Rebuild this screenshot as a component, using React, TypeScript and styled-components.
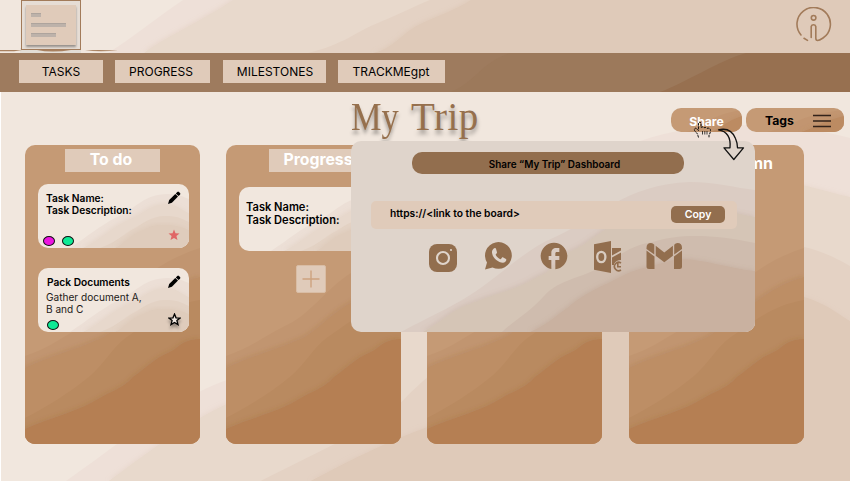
import React from "react";
import styled, { createGlobalStyle } from "styled-components";
import { MdFacebook } from "react-icons/md";

const GlobalStyle = createGlobalStyle`
  * { box-sizing: border-box; }
  body { margin: 0; background: #fff; font-family: Inter, sans-serif; color: #000; }
`;

/* ---------- dune backdrop ---------- */

type DuneSet = { w: number; h: number; colors: string[]; waves: string[]; shade: string };

const sand = ["#f1e7de", "#eee0d8", "#e8d9cc", "#e4d2c4", "#dfcab9"];

const DUNES: Record<string, DuneSet> = {
  header: {
    w: 850, h: 53, colors: sand, shade: "#c9a98f",
    waves: [
      "M108 53C135 36 160 15 183 0H850V53Z",
      "M144 53C165 37 200 22 233 0H850V53Z",
      "M308 53C345 44 355 32 380 22C400 14 415 6 430 0H850V53Z",
      "M373 53C395 48 400 34 420 24C440 15 455 10 471 0H850V53Z",
    ],
  },
  page: {
    w: 850, h: 389, colors: sand, shade: "#d0b29b",
    waves: [
      "M65 389C110 358 170 308 226 288C400 218 560 58 640 49C700 27 790 30 850 46V389Z",
      "M108 389C150 358 190 328 226 312C420 238 600 88 750 86C790 87 820 98 850 105V389Z",
      "M260 389C320 358 380 333 403 308C450 258 600 148 804 155C820 158 840 168 850 174V389Z",
      "M310 389C350 368 390 348 427 335C500 298 600 188 804 205C830 213 840 224 850 229V389Z",
    ],
  },
  column: {
    w: 175, h: 299, colors: ["#c59a75", "#c19570", "#bd8e65", "#b98a60", "#b57f52"], shade: "#8e5c33",
    waves: [
      "M0 211C25 203 40 190 57 182C85 170 98 145 125 128C145 114 160 108 175 103V299H0Z",
      "M0 223C25 211 50 205 72 195C88 190 102 170 125 158C143 145 155 138 175 132V299H0Z",
      "M0 273C25 260 45 247 60 235C80 220 88 200 105 190C125 176 145 160 175 155V299H0Z",
      "M0 284C25 273 55 266 75 253C82 248 98 244 108 232C120 224 130 213 143 208C155 203 155 195 175 194V299H0Z",
    ],
  },
  card: {
    w: 151, h: 64, colors: ["#f1e7de", "#ecdfd6", "#e7d8cc", "#e3d2c4", "#dfccbc"], shade: "#c7a78f",
    waves: [
      "M32 64C50 52 62 42 77 34C98 25 105 10 130 10C140 10 146 13 151 15V64Z",
      "M45 64C62 56 74 43 90 36C105 31 110 20 130 20C142 22 146 28 151 29V64Z",
      "M62 64C76 59 84 52 95 45C105 40 113 31 130 32C140 32 146 36 151 38V64Z",
      "M77 64C86 60 94 49 105 46C116 39 135 39 151 46V64Z",
    ],
  },
  popup: {
    w: 404, h: 191, colors: ["#dfd4cb", "#dbccc3", "#d5c5b6", "#cfbcae", "#c9b1a0"], shade: "#9c7860",
    waves: [
      "M50 191C66 182 82 175 102 164C140 145 170 110 202 97C245 78 275 43 339 41C365 41 385 47 404 49V191Z",
      "M72 191C90 181 98 171 116 164C140 154 165 149 186 136C205 128 207 119 220 110C240 102 250 87 275 78C300 66 320 62 345 66C365 65 385 73 404 76V191Z",
      "M151 191C165 178 180 170 193 155C208 138 232 137 249 126C270 114 280 104 302 101C330 92 365 94 404 102V191Z",
      "M179 191C195 184 202 177 216 167C234 151 252 145 269 136C285 127 300 126 322 119C345 115 370 126 404 130V191Z",
    ],
  },
  pill: {
    w: 96, h: 24, colors: ["#c59a75", "#c29570", "#bc8b62"], shade: "#a87950",
    waves: ["M20 24C42 20 50 7 96 2V24Z", "M54 24C68 20 75 13 96 8V24Z"],
  },
};

const DuneSvg = styled.svg`
  position: absolute;
  inset: 0;
  width: 100%;
  height: 100%;
  z-index: -1;
`;

function Dunes({ kind }: { kind: string }) {
  const d = DUNES[kind];
  const uid = React.useId();
  return (
    <DuneSvg viewBox={`0 0 ${d.w} ${d.h}`} preserveAspectRatio="none" aria-hidden>
      <filter id={uid} x="-5%" y="-10%" width="110%" height="120%">
        <feDropShadow dx="-1" dy="-1" stdDeviation="2" floodColor={d.shade} floodOpacity="0.16" />
      </filter>
      <rect width={d.w} height={d.h} fill={d.colors[0]} />
      {d.waves.map((w, i) => (
        <path key={i} d={w} fill={d.colors[i + 1]} filter={i % 2 ? `url(#${uid})` : undefined} />
      ))}
    </DuneSvg>
  );
}

/* ---------- layout ---------- */

const Screen = styled.div`
  position: relative;
  width: 850px;
  height: 481px;
  overflow: hidden;
  display: flex;
  flex-direction: column;
`;

const Header = styled.header`
  position: relative;
  isolation: isolate;
  height: 53px;
  display: flex;
  justify-content: space-between;
  padding: 0 18px 0 0;
`;

const Logo = styled.svg`
  width: 120px;
  height: 53px;
`;

const InfoIcon = styled.svg`
  width: 36px;
  height: 36px;
  margin-top: 7px;
`;

const Nav = styled.nav`
  position: relative;
  isolation: isolate;
  height: 39px;
  display: flex;
  padding: 7px 0 0 19px;
`;

const NavItem = styled.button<{ $w: number; $gap: number; $nudge?: number }>`
  width: ${(p) => p.$w}px;
  height: 23px;
  margin-right: ${(p) => p.$gap}px;
  padding: 0;
  border: 0;
  background: #e0cbba;
  font: 400 12px/23px Inter, sans-serif;
  color: #000;
  white-space: nowrap;
  text-indent: ${(p) => p.$nudge ?? 0}px;
`;

const Main = styled.main`
  position: relative;
  isolation: isolate;
  flex: 1;
  margin-left: 1px;
`;

const TitleBar = styled.div`
  height: 53px;
  display: flex;
  padding-left: 350px;
`;

const Title = styled.h1`
  flex: none;
  width: 320px;
  margin: 3px 0 0;
  display: flex;
  gap: 13px;
  font: 400 39px/44px "Liberation Serif", serif;
  color: #96704d;
  text-shadow: 0 4px 4px rgba(0, 0, 0, 0.35);
`;

const Narrow = styled.span`
  width: 47px;
  transform: scaleX(0.88);
  transform-origin: 0 0;
`;

const Trip = styled.span`
  letter-spacing: 0.5px;
`;

const Pill = styled.button<{ $w: number; $light?: boolean }>`
  position: relative;
  isolation: isolate;
  overflow: hidden;
  flex: none;
  width: ${(p) => p.$w}px;
  height: 24px;
  margin: 16px 4px 0 0;
  padding: ${(p) => (p.$light ? "3px 0 0" : "1px 12px 0 19px")};
  border: 0;
  border-radius: 10px;
  display: flex;
  align-items: center;
  justify-content: ${(p) => (p.$light ? "center" : "space-between")};
  font: 700 12.2px/24px Inter, sans-serif;
  color: ${(p) => (p.$light ? "#fff" : "#000")};
`;

const Board = styled.div`
  display: grid;
  grid-template-columns: 201px 201px 202px 175px;
  padding-left: 24px;
`;

const Column = styled.section`
  position: relative;
  isolation: isolate;
  overflow: hidden;
  width: 175px;
  height: 299px;
  border-radius: 10px;
  display: flex;
  flex-direction: column;
`;

const ColumnTitle = styled.h2<{ $x: number; $nudge?: number }>`
  width: 95px;
  height: 23px;
  margin: 4px 0 0 ${(p) => p.$x}px;
  background: #e0cbba;
  font: 700 15.8px/21px Inter, sans-serif;
  color: #fff;
  text-align: center;
  text-indent: ${(p) => p.$nudge ?? 0}px;
`;

const PlainTitle = styled.h2`
  margin: 7px 31px 0 0;
  font: 700 16px/22px Inter, sans-serif;
  color: #fff;
  text-align: right;
`;

const Card = styled.article<{ $top: number; $x?: number }>`
  position: relative;
  isolation: isolate;
  overflow: hidden;
  flex: none;
  width: 151px;
  height: 64px;
  margin: ${(p) => p.$top}px 0 0 13px;
  border-radius: 10px;
  display: flex;
  justify-content: space-between;
  padding: 0 8px 0 ${(p) => p.$x ?? 8}px;
`;

const CardBody = styled.div<{ $top: number; $size?: number; $line?: number }>`
  display: flex;
  flex-direction: column;
  padding-top: ${(p) => p.$top}px;
  font: 600 ${(p) => p.$size ?? 10.2}px/${(p) => p.$line ?? 12}px Inter, sans-serif;
  white-space: nowrap;
`;

const CardName = styled.span`
  padding-left: 1px;
`;

const Note = styled.p`
  margin: 3px 0 0;
  font: 400 10.1px/12px Inter, sans-serif;
  color: #1d1a18;
`;

const Tags = styled.div<{ $top: number; $x?: number }>`
  display: flex;
  gap: 7px;
  margin: ${(p) => p.$top}px 0 0 ${(p) => p.$x ?? -3}px;
`;

const Dot = styled.span<{ $color: string }>`
  width: 12px;
  height: 10px;
  border: 1px solid #111;
  border-radius: 50%;
  background: ${(p) => p.$color};
`;

const CardTools = styled.div<{ $bottom: number }>`
  display: flex;
  flex-direction: column;
  align-items: center;
  justify-content: space-between;
  padding: 7px 0 ${(p) => p.$bottom}px;
  svg { display: block; }
`;

const Shadowed = styled.svg`
  filter: drop-shadow(0 3px 1.5px rgba(0, 0, 0, 0.35));
`;

const AddButton = styled.button`
  width: 30px;
  height: 28px;
  margin: 14px 0 0 70px;
  padding: 0;
  border: 1px solid #d9bda5;
  border-radius: 2px;
  background: #e0cbba;
  svg { display: block; margin: auto; }
`;

/* ---------- share popup ---------- */

const Popup = styled.div`
  position: absolute;
  left: 351px;
  top: 141px;
  width: 404px;
  height: 191px;
  isolation: isolate;
  overflow: hidden;
  border-radius: 10px;
  display: flex;
  flex-direction: column;
`;

const PopupTitle = styled.div`
  width: 272px;
  height: 22px;
  margin: 11px 0 0 61px;
  border-radius: 10px;
  background: #926e4e;
  font: 600 9.95px/24px Inter, sans-serif;
  text-align: center;
  padding-left: 13px;
`;

const LinkRow = styled.div`
  width: 366px;
  height: 28px;
  margin: 27px 0 0 20px;
  padding: 0 12px 1px 19px;
  border-radius: 5px;
  background: #e0cbba;
  display: flex;
  align-items: center;
  justify-content: space-between;
  font: 600 10.25px/25px Inter, sans-serif;
`;

const LinkText = styled.span`
  padding-bottom: 2px;
`;

const CopyButton = styled.button`
  width: 54px;
  height: 17px;
  border: 0;
  padding: 0;
  border-radius: 5px;
  background: #926e4e;
  color: #fff;
  font: 600 10.5px/17px Inter, sans-serif;
`;

const Socials = styled.div`
  display: flex;
  align-items: flex-start;
  margin: 11px 0 0 75px;
  color: #926e4e;
  svg { display: block; flex: none; }
`;

const Slot = styled.span<{ $w: number; $dy?: number }>`
  width: ${(p) => p.$w}px;
  padding-top: ${(p) => p.$dy ?? 0}px;
  flex: none;
`;

const Pointer = styled.svg`
  position: absolute;
  left: 690px;
  top: 118px;
  width: 60px;
  height: 46px;
`;

/* ---------- small drawings ---------- */

const STAR = "M6 .6 7.5 4.3 11.5 4.6 8.4 7.1 9.5 11.1 6 8.9 2.5 11.1 3.6 7.1 .5 4.6 4.5 4.3Z";

const RedStar = () => (
  <svg width="12" height="12" viewBox="0 0 12 12"><path d={STAR} fill="#e06666" /></svg>
);

const OutlineStar = () => (
  <Shadowed width="13" height="13" viewBox="-0.5 -0.5 13 13">
    <path d={STAR} fill="#f4ece5" stroke="#000" strokeWidth="1.3" />
  </Shadowed>
);

const Pencil = () => (
  <svg width="14" height="14" viewBox="0 0 14 14">
    <path d="M1 13 2.2 9 8.3 2.9 11 5.6 4.9 11.8Z" />
    <path d="M8.8 2.4 10.3 .9Q11.1 .2 11.9 .9L13 2Q13.8 2.9 13 3.7L11.5 5.1Z" />
  </svg>
);

export default function App() {
  return (
    <>
      <GlobalStyle />
      <Screen>
        <Header>
          <Dunes kind="header" />
          <Logo viewBox="0 0 120 53">
            <defs>
              <filter id="paper" x="-20%" y="-20%" width="140%" height="150%">
                <feDropShadow dx="0" dy="2" stdDeviation="1.3" floodColor="#000" floodOpacity="0.35" />
              </filter>
            </defs>
            <rect x="20" y="48" width="61" height="5" fill="#e3ddd5" />
            <rect x="21.5" y=".5" width="59" height="49" fill="#e6ddd5" stroke="#a27b5a" />
            <rect x="26" y="5" width="50" height="40" fill="#e0cbba" filter="url(#paper)" />
            <g fill="#bdb2aa">
              <rect x="31" y="13" width="10" height="4" />
              <rect x="31" y="23" width="35" height="4" />
              <rect x="31" y="33" width="25" height="4" />
            </g>
            <g fill="#aea49d">
              <rect x="31" y="13" width="10" height="1" />
              <rect x="31" y="23" width="35" height="1" />
              <rect x="31" y="33" width="25" height="1" />
            </g>
            <g fill="#a8805f">
              <path d="M0 50H15L22 50.3 14 51.2H0Z" />
              <path d="M37 50H71Q62 51.5 53 51.5T37 50Z" />
              <path d="M85 50.3Q100 49.5 118 50.5Q110 51.3 101 51.3T85 50.3Z" />
            </g>
          </Logo>
          <InfoIcon viewBox="0 0 36 36" fill="none" stroke="#a27b5a" strokeWidth="1.6" strokeLinecap="round">
            <path d="M5 28A16.7 16.7 0 1 1 27 31Q19.8 36 19.8 31V19.5A2.4 2.4 0 0 0 15.2 19.5V30.5" />
            <path d="M8 31.3 11.5 33.4" />
            <circle cx="17.6" cy="10.8" r="2.3" />
          </InfoIcon>
        </Header>

        <Nav>
          <DuneSvg viewBox="0 0 850 39" preserveAspectRatio="none" aria-hidden>
            <rect width="850" height="39" fill="#9e7b5e" />
            <path d="M450 39C475 30 480 10 510 0H850V39Z" fill="#9c795b" />
            <path d="M660 39C685 30 718 8 746 0H850V39Z" fill="#977050" />
          </DuneSvg>
          <NavItem $w={84} $gap={12}>TASKS</NavItem>
          <NavItem $w={95} $gap={13} $nudge={-3}>PROGRESS</NavItem>
          <NavItem $w={103} $gap={12} $nudge={1}>MILESTONES</NavItem>
          <NavItem $w={107} $gap={0} $nudge={-1}>TRACKMEgpt</NavItem>
        </Nav>

        <Main>
          <Dunes kind="page" />
          <TitleBar>
            <Title><Narrow>My</Narrow><Trip>Trip</Trip></Title>
            <Pill $w={71} $light><Dunes kind="pill" />Share</Pill>
            <Pill $w={98}>
              <Dunes kind="pill" />Tags
              <svg width="20" height="14" viewBox="0 0 20 14">
                <path d="M1 1.5H19M1 7H19M1 12.5H19" stroke="#33231a" strokeWidth="1.3" />
              </svg>
            </Pill>
          </TitleBar>

          <Board>
            <Column>
              <Dunes kind="column" />
              <ColumnTitle $x={40} $nudge={-3}>To do</ColumnTitle>
              <Card $top={12}>
                <Dunes kind="card" />
                <CardBody $top={8}>
                  <span>Task Name:</span>
                  <span>Task Description:</span>
                  <Tags $top={20}><Dot $color="#ec14e0" /><Dot $color="#0eea95" /></Tags>
                </CardBody>
                <CardTools $bottom={7}><Pencil /><RedStar /></CardTools>
              </Card>
              <Card $top={20}>
                <Dunes kind="card" />
                <CardBody $top={8}>
                  <CardName>Pack Documents</CardName>
                  <Note>Gather document A,<br />B and C</Note>
                  <Tags $top={5} $x={1}><Dot $color="#0eea95" /></Tags>
                </CardBody>
                <CardTools $bottom={6}><Pencil /><OutlineStar /></CardTools>
              </Card>
            </Column>

            <Column>
              <Dunes kind="column" />
              <ColumnTitle $x={43} $nudge={3}>Progress</ColumnTitle>
              <Card $top={15} $x={7}>
                <Dunes kind="card" />
                <CardBody $top={14} $size={11.1} $line={13}>
                  <span>Task Name:</span>
                  <span>Task Description:</span>
                </CardBody>
              </Card>
              <AddButton aria-label="Add task">
                <svg width="18" height="18" viewBox="0 0 18 18">
                  <path d="M9 .5V17.5M.5 9H17.5" stroke="#cda37f" strokeWidth="1.4" />
                </svg>
              </AddButton>
            </Column>

            <Column><Dunes kind="column" /></Column>

            <Column>
              <Dunes kind="column" />
              <PlainTitle>Column</PlainTitle>
            </Column>
          </Board>
        </Main>

        <Popup>
          <Dunes kind="popup" />
          <PopupTitle>Share “My Trip” Dashboard</PopupTitle>
          <LinkRow>
            <LinkText>https://&lt;link to the board&gt;</LinkText>
            <CopyButton>Copy</CopyButton>
          </LinkRow>
          <Socials>
            <Slot $w={57} $dy={1}>
              <svg width="34" height="32" viewBox="0 0 34 32">
                <rect x="3" y="3" width="28" height="28" rx="8" fill="currentColor" />
                <circle cx="17" cy="17" r="6" fill="none" stroke="#dfd4cb" strokeWidth="2.1" />
                <circle cx="25" cy="9" r="1.1" fill="#dfd4cb" />
              </svg>
            </Slot>
            <Slot $w={55} $dy={1}>
              <svg width="30" height="30" viewBox="0 0 30 30">
                <path fill="currentColor" d="M2 28.5 4 21.5A13.4 13.4 0 1 1 9.5 26.5Z" />
                <path
                  fill="#dfd4cb" transform="translate(7.3 6) scale(.72)"
                  d="M6.6 1.5C5 1.5 2.3 4.5 2.3 7c0 7 8 14.8 15.2 14.8 2.6 0 4.8-2.4 4.8-4.1 0-.8-.4-1.2-1.1-1.5l-3.2-1.6c-.8-.4-1.4-.2-1.9.4l-1.3 1.6c-.4.5-.9.5-1.5.2-2.2-1-4.6-3.3-5.7-5.6-.2-.5-.2-.9.2-1.3l1.1-1.3c.4-.5.5-1 .3-1.6L8 2.7c-.3-.8-.7-1.2-1.4-1.2Z"
                />
              </svg>
            </Slot>
            <Slot $w={53}><MdFacebook size={32} /></Slot>
            <Slot $w={55}>
              <svg width="32" height="34" viewBox="0 0 32 34">
                <path fill="currentColor" d="M3 4.2 20 1V33L3 29.8Z" />
                <ellipse cx="10.3" cy="17" rx="4.1" ry="5.2" fill="none" stroke="#d9ccc0" strokeWidth="2.3" />
                <path fill="currentColor" d="M21 8H30V10.5L21 15.5ZM21 17.5 30 12.5V20Q25 20 23 24V25H21Z" />
                <path fill="none" stroke="currentColor" strokeWidth="1.6" d="M30 30A4.2 4.2 0 1 1 30 23M26.8 22.5V26.8H30" />
              </svg>
            </Slot>
            <Slot $w={37} $dy={2}>
              <svg width="36" height="29" viewBox="0 0 36 29" fill="currentColor">
                <path d="M.5 8.5 8.5 14.5V27H3Q.5 27 .5 24.5ZM28 14.5 36 8.5V24.5Q36 27 33.5 27H28Z" />
                <path d="M.5 6Q.5 1 5 1Q7 1 8.3 2.7L8.3 12.6 .5 7ZM36 6Q36 1 31.5 1Q29.5 1 28.2 2.7V12.6L36 7Z" />
                <path d="M9.7 3.8 18.3 10.4 26.9 3.8V13.8L18.3 20.3 9.7 13.8Z" />
              </svg>
            </Slot>
          </Socials>
        </Popup>

        <Pointer viewBox="0 0 60 46" fill="none" stroke="#111" aria-hidden>
          <path
            d="M8.5 19.5 7.5 16 4.5 12.5Q4 10 6 10.2L8.5 12.5V5Q9.5 3.3 11 5V9.5Q12.5 8 14 9.8 15.8 8.8 17 10.3 19.5 9.6 20.4 11.5 20.8 14.5 19 17V19.5"
            strokeWidth="1" strokeDasharray="2.5 .8"
          />
          <path d="M12.5 13V16.5M14.8 13V16.5M17 13V16.5" strokeWidth=".8" />
          <path
            d="M28.5 11.8Q41 9 45.5 20.5Q47.5 25 47.5 29.8H53.5L43.8 41.5 34 29.8H40Q41.5 14 28.5 11.8Z"
            strokeWidth="1.3" strokeLinejoin="round"
          />
        </Pointer>
      </Screen>
    </>
  );
}
